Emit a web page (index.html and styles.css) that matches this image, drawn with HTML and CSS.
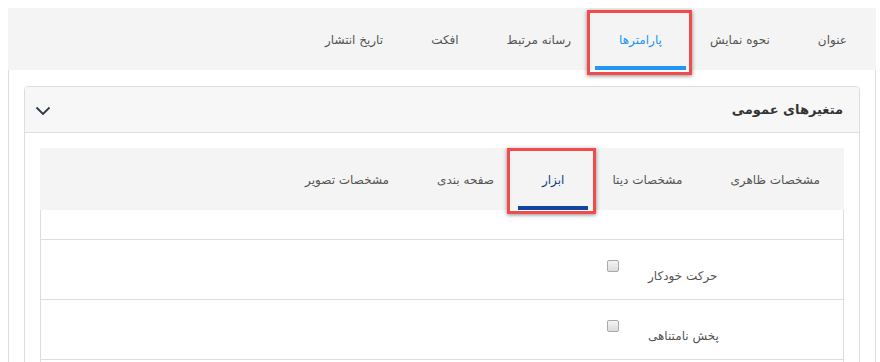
FILE: index.html
```html
<!DOCTYPE html>
<html lang="fa" dir="rtl">
<head>
    <meta charset="UTF-8">
    <meta name="viewport" content="width=device-width, initial-scale=1.0">
    <title>پارامترها</title>
    <link rel="stylesheet" href="styles.css">
</head>
<body>
    <div class="main-tabs">
        <div class="tab">عنوان</div>
        <div class="tab">نحوه نمایش</div>
        <div class="tab active marked">پارامترها</div>
        <div class="tab">رسانه مرتبط</div>
        <div class="tab">افکت</div>
        <div class="tab">تاریخ انتشار</div>
    </div>

    <div class="main-pane">
        <div class="panel">
            <div class="panel-heading">
                <span class="panel-title">متغیرهای عمومی</span>
                <svg class="chevron" width="16" height="10" viewBox="0 0 16 10">
                    <path d="M1.5 1.5 L8 8 L14.5 1.5" fill="none" stroke="#2b3a4a" stroke-width="1.8"/>
                </svg>
            </div>
            <div class="panel-body">
                <div class="sub-tabs">
                    <div class="tab">مشخصات ظاهری</div>
                    <div class="tab">مشخصات دیتا</div>
                    <div class="tab active marked">ابزار</div>
                    <div class="tab">صفحه بندی</div>
                    <div class="tab">مشخصات تصویر</div>
                </div>
                <div class="sub-pane">
                    <div class="spacer-row"></div>
                    <div class="field-row">
                        <label class="field-label">حرکت خودکار</label>
                        <span class="check"></span>
                    </div>
                    <div class="field-row">
                        <label class="field-label">پخش نامتناهی</label>
                        <span class="check"></span>
                    </div>
                    <div class="field-row"></div>
                </div>
            </div>
        </div>
    </div>
</body>
</html>
```

FILE: styles.css
```css
html, body {
    height: 362px;
    overflow: hidden;
}

body {
    margin: 8px 4px 0 8px;
    font-family: 'DejaVu Sans', sans-serif;
    font-size: 12px;
    color: #555;
    background-color: #fff;
}

.main-tabs,
.sub-tabs {
    display: flex;
    height: 62px;
    background-color: #f4f4f4;
}

.main-tabs {
    padding-right: 5px;
}

.tab {
    position: relative;
    padding: 2px 24px 0;
    line-height: 60px;
    border-bottom: 4px solid transparent;
    box-sizing: border-box;
    height: 62px;
    white-space: nowrap;
}

.main-tabs .tab.active {
    color: #2196f3;
    border-bottom-color: #2196f3;
}

.sub-tabs .tab.active {
    color: #123d8c;
    border-bottom-color: #0d47a1;
}

/* red annotation boxes */
.tab.marked::after {
    content: '';
    position: absolute;
    border: 3px solid #f24b4b;
    box-shadow: 0 1px 4px rgba(0,0,0,0.45);
}

.main-tabs .tab.marked::after {
    top: 2px;
    left: -8px;
    right: -6px;
    bottom: -9px;
}

.sub-tabs .tab.marked::after {
    top: 0;
    left: -11px;
    right: -8px;
    bottom: -8px;
}

.main-pane {
    border-left: 1px solid #ddd;
    border-right: 1px solid #ddd;
    padding: 16px 15px 0;
    height: 300px;
}

.panel {
    border: 1px solid #ddd;
    border-radius: 4px;
}

.panel-heading {
    display: flex;
    justify-content: space-between;
    align-items: center;
    height: 45px;
    padding: 0 16px 0 10px;
    background-color: #f7f7f7;
    border-bottom: 1px solid #ddd;
    border-radius: 4px 4px 0 0;
}

.panel-title {
    font-size: 13px;
    font-weight: bold;
    color: #333;
}

.chevron {
    display: block;
    margin-top: 2px;
}

.panel-body {
    padding: 15px 15px 0;
}

.sub-pane {
    border-left: 1px solid #ddd;
    border-right: 1px solid #ddd;
}

.spacer-row {
    height: 29px;
    border-bottom: 1px solid #ddd;
}

.field-row {
    display: flex;
    align-items: flex-start;
    height: 59px;
    border-bottom: 1px solid #ddd;
    padding-right: 84px;
}

.field-label {
    width: 111px;
    text-align: left;
    margin-top: 27px;
    line-height: 18px;
}

.check {
    width: 10px;
    height: 10px;
    margin-top: 20px;
    margin-right: 29px;
    border: 1px solid #a9a9a9;
    border-radius: 2px;
    background: linear-gradient(#f4f4f4, #dcdcdc);
}
```
